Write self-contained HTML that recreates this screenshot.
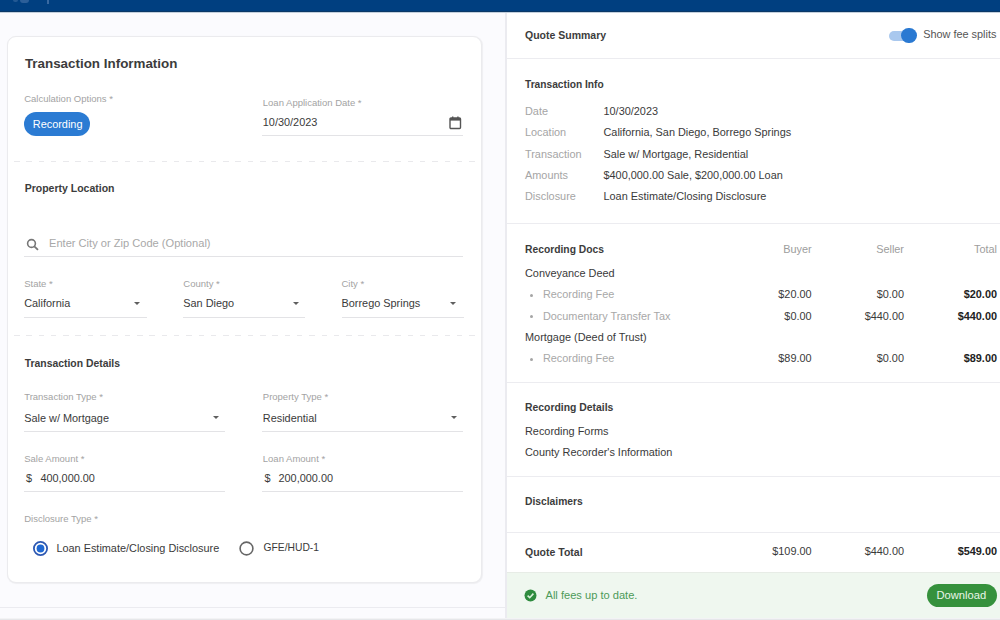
<!DOCTYPE html>
<html><head><meta charset="utf-8"><style>
html,body{margin:0;padding:0;}
body{width:1000px;height:620px;overflow:hidden;position:relative;background:#fbfbfe;font-family:"Liberation Sans",sans-serif;}
.t{position:absolute;white-space:nowrap;}
</style></head><body>
<div style="position:absolute;left:0px;top:0px;width:1000px;height:13px;z-index:5;background:linear-gradient(#003f80 0,#003f80 10.5px,#0b3866 11px,#0b3866 11.6px,#9fb3c8 12.2px,#fff 13px);"></div>
<div style="position:absolute;left:13px;top:0px;width:5px;height:2px;z-index:6;background:#8aa6cc;opacity:.25;border-radius:0 0 3px 3px;"></div>
<div style="position:absolute;left:20px;top:0px;width:9px;height:2.6px;z-index:6;background:#8aa6cc;opacity:.32;border-radius:0 0 4px 4px;"></div>
<div style="position:absolute;left:47.2px;top:0px;width:1.4px;height:3.5px;z-index:6;background:#5f86b8;opacity:.6;"></div>
<div style="position:absolute;left:7px;top:36px;width:473px;height:545px;background:#fff;border:1px solid #ebebee;border-radius:9px;box-shadow:0.5px 0.5px 1px rgba(0,0,0,.05);"></div>
<div style="position:absolute;left:14.3px;top:161px;width:466.7px;height:1px;background-image:repeating-linear-gradient(90deg,#e9e9ec 0 5.5px,transparent 5.5px 12.3px);"></div>
<div style="position:absolute;left:14.3px;top:335px;width:466.7px;height:1px;background-image:repeating-linear-gradient(90deg,#e9e9ec 0 5.5px,transparent 5.5px 12.3px);"></div>
<div style="position:absolute;left:0px;top:607px;width:505px;height:1px;background:#ebebf0;"></div>
<div class="t" style="left:24.90px;top:56.12px;font-size:13.4px;line-height:16.08px;color:#3c3c3c;font-weight:bold;">Transaction Information</div>
<div class="t" style="left:24.20px;top:93.21px;font-size:9.5px;line-height:11.40px;color:#a3a3a3;">Calculation Options *</div>
<div style="position:absolute;left:24.4px;top:112px;width:65.2px;height:24.4px;background:#2b7bd3;border-radius:13px;"></div>
<div class="t" style="left:32.80px;top:118.08px;font-size:10.9px;line-height:13.08px;color:#fff;">Recording</div>
<div class="t" style="left:262.80px;top:96.91px;font-size:9.5px;line-height:11.40px;color:#a3a3a3;">Loan Application Date *</div>
<div class="t" style="left:262.80px;top:116.48px;font-size:10.9px;line-height:13.08px;color:#3a3a3a;">10/30/2023</div>
<div style="position:absolute;left:262px;top:135px;width:201px;height:1px;background:#e3e3e6;"></div>
<svg style="position:absolute;left:448px;top:115px" width="14" height="15" viewBox="0 0 14 15"><rect x="2" y="3" width="10.5" height="10.5" rx="1" fill="none" stroke="#555" stroke-width="1.4"/><rect x="2" y="3" width="10.5" height="2.6" fill="#555"/><rect x="4" y="1.5" width="1.4" height="2" fill="#555"/><rect x="9.2" y="1.5" width="1.4" height="2" fill="#555"/></svg>
<div class="t" style="left:24.70px;top:182.26px;font-size:10.5px;line-height:12.60px;color:#3c3c3c;font-weight:bold;">Property Location</div>
<svg style="position:absolute;left:26.3px;top:237.8px" width="14" height="13" viewBox="0 0 14 13"><circle cx="5.5" cy="5.5" r="3.9" fill="none" stroke="#777" stroke-width="1.6"/><line x1="8.3" y1="8.3" x2="12" y2="11.8" stroke="#777" stroke-width="1.8"/></svg>
<div class="t" style="left:49.00px;top:237.19px;font-size:11.1px;line-height:13.32px;color:#a8a8a8;">Enter City or Zip Code (Optional)</div>
<div style="position:absolute;left:24px;top:256px;width:439px;height:1px;background:#e3e3e6;"></div>
<div class="t" style="left:24.20px;top:277.51px;font-size:9.5px;line-height:11.40px;color:#a3a3a3;">State *</div>
<div class="t" style="left:24.20px;top:297.08px;font-size:10.9px;line-height:13.08px;color:#3a3a3a;">California</div>
<div style="position:absolute;left:134.0px;top:302px;width:0;height:0;border-left:3.2px solid transparent;border-right:3.2px solid transparent;border-top:3.6px solid #5f5f5f;"></div>
<div style="position:absolute;left:24px;top:317px;width:123px;height:1px;background:#e3e3e6;"></div>
<div class="t" style="left:183.30px;top:277.51px;font-size:9.5px;line-height:11.40px;color:#a3a3a3;">County *</div>
<div class="t" style="left:183.30px;top:297.08px;font-size:10.9px;line-height:13.08px;color:#3a3a3a;">San Diego</div>
<div style="position:absolute;left:292.5px;top:302px;width:0;height:0;border-left:3.2px solid transparent;border-right:3.2px solid transparent;border-top:3.6px solid #5f5f5f;"></div>
<div style="position:absolute;left:183px;top:317px;width:122px;height:1px;background:#e3e3e6;"></div>
<div class="t" style="left:341.50px;top:277.51px;font-size:9.5px;line-height:11.40px;color:#a3a3a3;">City *</div>
<div class="t" style="left:341.50px;top:297.08px;font-size:10.9px;line-height:13.08px;color:#3a3a3a;">Borrego Springs</div>
<div style="position:absolute;left:450.0px;top:302px;width:0;height:0;border-left:3.2px solid transparent;border-right:3.2px solid transparent;border-top:3.6px solid #5f5f5f;"></div>
<div style="position:absolute;left:342px;top:317px;width:122px;height:1px;background:#e3e3e6;"></div>
<div class="t" style="left:24.70px;top:357.76px;font-size:10.4px;line-height:12.48px;color:#3c3c3c;font-weight:bold;">Transaction Details</div>
<div class="t" style="left:24.20px;top:391.01px;font-size:9.5px;line-height:11.40px;color:#a3a3a3;">Transaction Type *</div>
<div class="t" style="left:24.20px;top:411.68px;font-size:10.9px;line-height:13.08px;color:#3a3a3a;">Sale w/ Mortgage</div>
<div style="position:absolute;left:213.2px;top:416px;width:0;height:0;border-left:3.2px solid transparent;border-right:3.2px solid transparent;border-top:3.6px solid #5f5f5f;"></div>
<div style="position:absolute;left:24px;top:431px;width:201px;height:1px;background:#e3e3e6;"></div>
<div class="t" style="left:262.80px;top:391.01px;font-size:9.5px;line-height:11.40px;color:#a3a3a3;">Property Type *</div>
<div class="t" style="left:262.80px;top:411.68px;font-size:10.9px;line-height:13.08px;color:#3a3a3a;">Residential</div>
<div style="position:absolute;left:450.5px;top:416px;width:0;height:0;border-left:3.2px solid transparent;border-right:3.2px solid transparent;border-top:3.6px solid #5f5f5f;"></div>
<div style="position:absolute;left:262px;top:431px;width:201px;height:1px;background:#e3e3e6;"></div>
<div class="t" style="left:24.20px;top:453.01px;font-size:9.5px;line-height:11.40px;color:#a3a3a3;">Sale Amount *</div>
<div class="t" style="left:25.90px;top:472.18px;font-size:10.9px;line-height:13.08px;color:#3a3a3a;">$</div>
<div class="t" style="left:40.40px;top:472.18px;font-size:10.9px;line-height:13.08px;color:#3a3a3a;">400,000.00</div>
<div style="position:absolute;left:24px;top:491px;width:201px;height:1px;background:#e3e3e6;"></div>
<div class="t" style="left:262.80px;top:453.01px;font-size:9.5px;line-height:11.40px;color:#a3a3a3;">Loan Amount *</div>
<div class="t" style="left:264.50px;top:472.18px;font-size:10.9px;line-height:13.08px;color:#3a3a3a;">$</div>
<div class="t" style="left:278.50px;top:472.18px;font-size:10.9px;line-height:13.08px;color:#3a3a3a;">200,000.00</div>
<div style="position:absolute;left:262px;top:491px;width:201px;height:1px;background:#e3e3e6;"></div>
<div class="t" style="left:24.20px;top:513.41px;font-size:9.5px;line-height:11.40px;color:#a3a3a3;">Disclosure Type *</div>
<svg style="position:absolute;left:32px;top:540px" width="17" height="17" viewBox="0 0 17 17"><circle cx="8.5" cy="8.5" r="6.6" fill="none" stroke="#2d58b2" stroke-width="1.8"/><circle cx="8.5" cy="8.5" r="3.9" fill="#1f68d2"/></svg>
<div class="t" style="left:56.40px;top:541.68px;font-size:10.9px;line-height:13.08px;color:#3a3a3a;">Loan Estimate/Closing Disclosure</div>
<svg style="position:absolute;left:238.3px;top:540px" width="17" height="17" viewBox="0 0 17 17"><circle cx="8.5" cy="8.5" r="6.4" fill="none" stroke="#666" stroke-width="1.6"/></svg>
<div class="t" style="left:263.50px;top:541.75px;font-size:10.3px;line-height:12.36px;color:#3a3a3a;">GFE/HUD-1</div>
<div style="position:absolute;left:505px;top:11px;width:495px;height:609px;background:#fff;border-left:2px solid #ebebf0;box-sizing:border-box;"></div>
<div class="t" style="left:525.00px;top:29.06px;font-size:10.5px;line-height:12.60px;color:#3c3c3c;font-weight:bold;">Quote Summary</div>
<div style="position:absolute;left:888.5px;top:31px;width:22px;height:10px;background:#a9c8ee;border-radius:5px;"></div>
<div style="position:absolute;left:901px;top:27.6px;width:15.6px;height:15.6px;background:#2a79d2;border-radius:50%;"></div>
<div class="t" style="left:923.20px;top:28.28px;font-size:10.9px;line-height:13.08px;color:#555;">Show fee splits</div>
<div style="position:absolute;left:507px;top:58px;width:493px;height:1px;background:#ececf0;"></div>
<div class="t" style="left:525.00px;top:79.15px;font-size:10.2px;line-height:12.24px;color:#3c3c3c;font-weight:bold;">Transaction Info</div>
<div class="t" style="left:525.00px;top:105.28px;font-size:10.9px;line-height:13.08px;color:#a5a5a5;">Date</div>
<div class="t" style="left:603.50px;top:105.28px;font-size:10.9px;line-height:13.08px;color:#3a3a3a;">10/30/2023</div>
<div class="t" style="left:525.00px;top:126.28px;font-size:10.9px;line-height:13.08px;color:#a5a5a5;">Location</div>
<div class="t" style="left:603.50px;top:126.28px;font-size:10.9px;line-height:13.08px;color:#3a3a3a;">California, San Diego, Borrego Springs</div>
<div class="t" style="left:525.00px;top:148.18px;font-size:10.9px;line-height:13.08px;color:#a5a5a5;">Transaction</div>
<div class="t" style="left:603.50px;top:148.18px;font-size:10.9px;line-height:13.08px;color:#3a3a3a;">Sale w/ Mortgage, Residential</div>
<div class="t" style="left:525.00px;top:169.18px;font-size:10.9px;line-height:13.08px;color:#a5a5a5;">Amounts</div>
<div class="t" style="left:603.50px;top:169.18px;font-size:10.9px;line-height:13.08px;color:#3a3a3a;">$400,000.00 Sale, $200,000.00 Loan</div>
<div class="t" style="left:525.00px;top:190.18px;font-size:10.9px;line-height:13.08px;color:#a5a5a5;">Disclosure</div>
<div class="t" style="left:603.50px;top:190.18px;font-size:10.9px;line-height:13.08px;color:#3a3a3a;">Loan Estimate/Closing Disclosure</div>
<div style="position:absolute;left:507px;top:223px;width:493px;height:1px;background:#ececf0;"></div>
<div class="t" style="left:525.00px;top:243.75px;font-size:10.3px;line-height:12.36px;color:#3c3c3c;font-weight:bold;">Recording Docs</div>
<div class="t" style="right:188.40px;top:243.18px;font-size:10.9px;line-height:13.08px;color:#9d9d9d;">Buyer</div>
<div class="t" style="right:96.00px;top:243.18px;font-size:10.9px;line-height:13.08px;color:#9d9d9d;">Seller</div>
<div class="t" style="right:3.00px;top:243.18px;font-size:10.9px;line-height:13.08px;color:#9d9d9d;">Total</div>
<div class="t" style="left:525.00px;top:267.08px;font-size:10.9px;line-height:13.08px;color:#3a3a3a;">Conveyance Deed</div>
<div style="position:absolute;left:529.6px;top:293.7px;width:3px;height:3px;background:#a5a5a5;border-radius:50%;"></div>
<div class="t" style="left:542.90px;top:288.18px;font-size:10.9px;line-height:13.08px;color:#a8a8a8;">Recording Fee</div>
<div class="t" style="right:188.40px;top:288.18px;font-size:10.9px;line-height:13.08px;color:#3a3a3a;">$20.00</div>
<div class="t" style="right:96.00px;top:288.18px;font-size:10.9px;line-height:13.08px;color:#3a3a3a;">$0.00</div>
<div class="t" style="right:3.00px;top:288.18px;font-size:10.9px;line-height:13.08px;color:#222;font-weight:bold;">$20.00</div>
<div style="position:absolute;left:529.6px;top:315.09999999999997px;width:3px;height:3px;background:#a5a5a5;border-radius:50%;"></div>
<div class="t" style="left:542.90px;top:309.58px;font-size:10.9px;line-height:13.08px;color:#a8a8a8;">Documentary Transfer Tax</div>
<div class="t" style="right:188.40px;top:309.58px;font-size:10.9px;line-height:13.08px;color:#3a3a3a;">$0.00</div>
<div class="t" style="right:96.00px;top:309.58px;font-size:10.9px;line-height:13.08px;color:#3a3a3a;">$440.00</div>
<div class="t" style="right:3.00px;top:309.58px;font-size:10.9px;line-height:13.08px;color:#222;font-weight:bold;">$440.00</div>
<div class="t" style="left:525.00px;top:331.28px;font-size:10.9px;line-height:13.08px;color:#3a3a3a;">Mortgage (Deed of Trust)</div>
<div style="position:absolute;left:529.6px;top:357.5px;width:3px;height:3px;background:#a5a5a5;border-radius:50%;"></div>
<div class="t" style="left:542.90px;top:351.98px;font-size:10.9px;line-height:13.08px;color:#a8a8a8;">Recording Fee</div>
<div class="t" style="right:188.40px;top:351.98px;font-size:10.9px;line-height:13.08px;color:#3a3a3a;">$89.00</div>
<div class="t" style="right:96.00px;top:351.98px;font-size:10.9px;line-height:13.08px;color:#3a3a3a;">$0.00</div>
<div class="t" style="right:3.00px;top:351.98px;font-size:10.9px;line-height:13.08px;color:#222;font-weight:bold;">$89.00</div>
<div style="position:absolute;left:507px;top:382px;width:493px;height:1px;background:#ececf0;"></div>
<div class="t" style="left:525.00px;top:401.76px;font-size:10.4px;line-height:12.48px;color:#3c3c3c;font-weight:bold;">Recording Details</div>
<div class="t" style="left:525.00px;top:424.68px;font-size:10.9px;line-height:13.08px;color:#3a3a3a;">Recording Forms</div>
<div class="t" style="left:525.00px;top:446.08px;font-size:10.9px;line-height:13.08px;color:#3a3a3a;">County Recorder's Information</div>
<div style="position:absolute;left:507px;top:476px;width:493px;height:1px;background:#ececf0;"></div>
<div class="t" style="left:525.00px;top:495.85px;font-size:10.3px;line-height:12.36px;color:#3c3c3c;font-weight:bold;">Disclaimers</div>
<div style="position:absolute;left:507px;top:532px;width:493px;height:1px;background:#ececf0;"></div>
<div class="t" style="left:525.00px;top:545.56px;font-size:10.5px;line-height:12.60px;color:#3c3c3c;font-weight:bold;">Quote Total</div>
<div class="t" style="right:188.40px;top:545.18px;font-size:10.9px;line-height:13.08px;color:#3a3a3a;">$109.00</div>
<div class="t" style="right:96.00px;top:545.18px;font-size:10.9px;line-height:13.08px;color:#3a3a3a;">$440.00</div>
<div class="t" style="right:3.00px;top:545.18px;font-size:10.9px;line-height:13.08px;color:#222;font-weight:bold;">$549.00</div>
<div style="position:absolute;left:507px;top:572px;width:493px;height:46px;background:#eff7ef;border-top:1px solid #e7ece6;box-sizing:border-box;"></div>
<div style="position:absolute;left:0px;top:618px;width:1000px;height:2px;background:linear-gradient(#f3f3f5 0 1px,#e6e7ea 1px);"></div>
<svg style="position:absolute;left:524px;top:589px" width="13" height="13" viewBox="0 0 13 13"><circle cx="6.5" cy="6.5" r="6" fill="#2e8b3e"/><path d="M3.6 6.7 L5.7 8.7 L9.4 4.6" fill="none" stroke="#d9f0da" stroke-width="1.6"/></svg>
<div class="t" style="left:545.50px;top:589.09px;font-size:11.1px;line-height:13.32px;color:#4c9a58;">All fees up to date.</div>
<div style="position:absolute;left:927.3px;top:584.2px;width:69.8px;height:23px;background:#35913c;border-radius:12px;"></div>
<div class="t" style="left:936.40px;top:589.40px;font-size:11.2px;line-height:13.44px;color:#e8f5e8;">Download</div>
</body></html>
